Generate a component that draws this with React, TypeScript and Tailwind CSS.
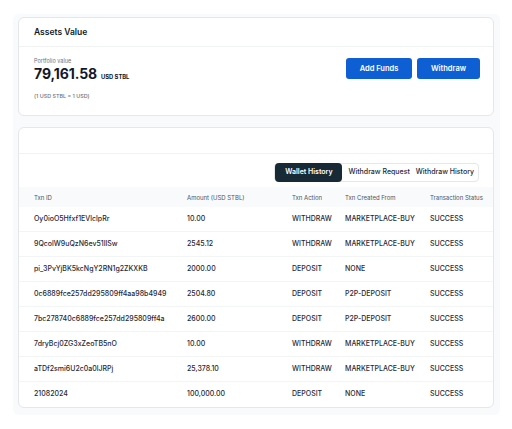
const rows = [
  { id: "Oy0ioO5Hfxf1EVlclpRr", amount: "10.00", action: "WITHDRAW", from: "MARKETPLACE-BUY", status: "SUCCESS" },
  { id: "9QcolW9uQzN6ev51llSw", amount: "2545.12", action: "WITHDRAW", from: "MARKETPLACE-BUY", status: "SUCCESS" },
  { id: "pi_3PvYjBK5kcNgY2RN1g2ZKXKB", amount: "2000.00", action: "DEPOSIT", from: "NONE", status: "SUCCESS" },
  { id: "0c6889fce257dd295809ff4aa98b4949", amount: "2504.80", action: "DEPOSIT", from: "P2P-DEPOSIT", status: "SUCCESS" },
  { id: "7bc278740c6889fce257dd295809ff4a", amount: "2600.00", action: "DEPOSIT", from: "P2P-DEPOSIT", status: "SUCCESS" },
  { id: "7dryBcj0ZG3xZeoTB5nO", amount: "10.00", action: "WITHDRAW", from: "MARKETPLACE-BUY", status: "SUCCESS" },
  { id: "aTDf2smi6U2c0a0lJRPj", amount: "25,378.10", action: "WITHDRAW", from: "MARKETPLACE-BUY", status: "SUCCESS" },
  { id: "21082024", amount: "100,000.00", action: "DEPOSIT", from: "NONE", status: "SUCCESS" },
];

const cols = "grid grid-cols-[153px_105px_53px_85px_1fr] pl-[15px]";

export default function App() {
  return (
    <div className="min-h-[429px] bg-white pt-[14px] font-['Inter',sans-serif] text-[#111827]">
      <div className="ml-[13px] w-[487px] rounded-md bg-[#f9fafb] pl-[5px] pr-[6px] pt-[3px] pb-[7px]">
        {/* assets card */}
        <div className="rounded-md border border-[#e5e7eb] bg-white">
          <div className="flex h-[29px] items-center border-b border-[#f1f2f4] px-[15px]">
            <h2 className="text-[8.5px] font-semibold">Assets Value</h2>
          </div>
          <div className="flex h-[68px] justify-between pl-[15px] pr-[13px] pt-[10px]">
            <div>
              <p className="text-[5.5px] leading-[8px] text-[#6b7280]">Portfolio value</p>
              <div className="flex items-baseline gap-[4px] leading-[18px]">
                <span className="text-[14px] font-bold tracking-[-0.1px]">79,161.58</span>
                <span className="text-[5.8px] font-bold">USD STBL</span>
              </div>
              <p className="mt-[6px] text-[5.4px] font-medium text-[#6b7280]">(1 USD STBL = 1 USD)</p>
            </div>
            <div className="flex gap-[5px] pt-[1px]">
              <button className="h-[21px] w-[66px] rounded-[3px] bg-[#0f5fd4] text-[7.5px] font-semibold text-white">
                Add Funds
              </button>
              <button className="h-[21px] w-[63px] rounded-[3px] bg-[#0f5fd4] text-[7.5px] font-semibold text-white">
                Withdraw
              </button>
            </div>
          </div>
        </div>

        {/* history card */}
        <div className="mt-[11px] overflow-hidden rounded-md border border-[#e5e7eb] bg-white">
          <div className="h-[26px] border-b border-[#f1f2f4]" />
          <div className="flex justify-end pr-[14px] pt-[9px] pb-[5px]">
            <div className="flex h-[19px] items-center rounded-[4px] border border-[#e5e7eb]">
              <button className="h-[19px] w-[67px] rounded-[4px] bg-[#172a36] text-[7px] font-semibold text-white">
                Wallet History
              </button>
              <button className="px-[6px] text-[7px] font-medium text-[#1f2937]">Withdraw Request</button>
              <button className="pr-[4px] text-[7px] font-medium text-[#1f2937]">Withdraw History</button>
            </div>
          </div>
          <div className={`${cols} h-[20px] items-center bg-[#f9fafb] text-[6px] text-[#4b5563]`}>
            <span>Txn ID</span>
            <span>Amount (USD STBL)</span>
            <span>Txn Action</span>
            <span>Txn Created From</span>
            <span>Transaction Status</span>
          </div>
          {rows.map((r, i) => (
            <div
              key={r.id}
              className={`${cols} h-[25px] items-center text-[7px] font-medium text-[#1f2937] ${
                i < rows.length - 1 ? "border-b border-[#f3f4f6]" : ""
              }`}
            >
              <span>{r.id}</span>
              <span>{r.amount}</span>
              <span>{r.action}</span>
              <span>{r.from}</span>
              <span>{r.status}</span>
            </div>
          ))}
        </div>
      </div>
    </div>
  );
}
